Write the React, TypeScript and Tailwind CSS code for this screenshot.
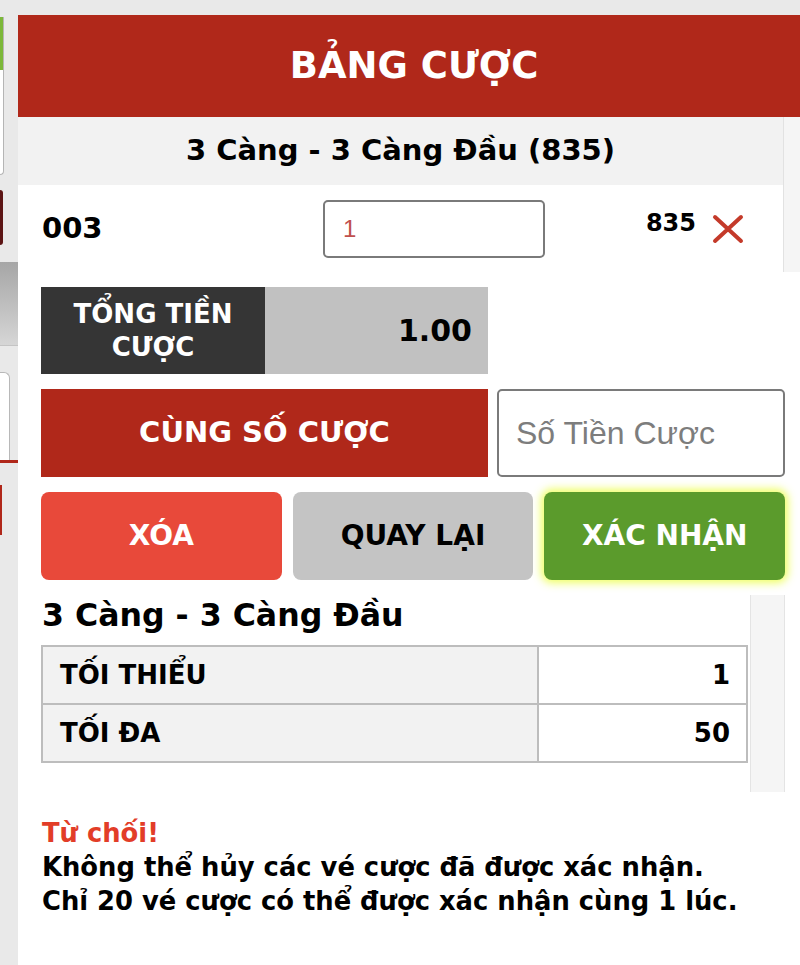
import React from "react"

function LeftStrip() {
  // pieces of the page behind the panel, cut off at the left edge
  return (
    <div className="w-[18px] shrink-0 flex flex-col">
      <div className="h-[17px]" />
      <div className="w-[4px] h-[158px] rounded-br-[4px] border-r border-b border-[#b5b5b5] bg-white overflow-hidden">
        <div className="h-[53px] bg-[#7cb83a]" />
      </div>
      <div className="mt-[15px] w-[3px] h-[55px] rounded-r-[3px] bg-[#5c1414]" />
      <div className="mt-[17px] h-[84px] bg-linear-to-b from-[#a6a6a6] to-[#d6d6d6] border-b border-[#c4c4c4]" />
      <div className="mt-[26px] w-[10px] h-[88px] rounded-tr-[6px] border-t border-r border-[#b8b8b8] bg-white" />
      <div className="h-[3px] bg-[#b0271a]" />
      <div className="mt-[22px] w-[2px] h-[50px] bg-[#b0271a]" />
    </div>
  )
}

function CloseIcon() {
  return (
    <svg width="34" height="30" viewBox="0 0 34 30" className="shrink-0">
      <path d="M4 3 L30 27 M30 3 L4 27" stroke="#c43a2a" strokeWidth="4" strokeLinecap="round" />
    </svg>
  )
}

export default function App() {
  return (
    <div className="w-[800px] h-[965px] flex bg-[#e9e9e9] overflow-hidden font-['DejaVu_Sans',sans-serif] font-bold text-black">
      <LeftStrip />

      <div className="flex-1 mt-[15px] flex flex-col bg-white">
        {/* Header */}
        <div className="h-[102px] shrink-0 bg-[#b0281a] flex items-center justify-center pl-[10px] text-white text-[37px]">
          BẢNG CƯỢC
        </div>

        {/* Bet list */}
        <div className="flex shrink-0">
          <div className="w-[765px]">
            <div className="h-[68px] bg-[#f2f2f2] flex items-center justify-center text-[29px]">
              3 Càng - 3 Càng Đầu (835)
            </div>
            <div className="h-[87px] flex items-center pl-[24px] pr-[38px]">
              <span className="w-[281px] text-[29px]">003</span>
              <input
                readOnly
                value="1"
                className="w-[222px] h-[58px] rounded-[5px] border-2 border-[#7a7a7a] pl-[18px] text-[24px] font-normal text-[#c0504d] font-['Liberation_Sans',sans-serif] outline-none"
              />
              <div className="flex-1 flex items-center justify-end gap-[15px]">
                <span className="text-[24px] mb-[12px]">835</span>
                <CloseIcon />
              </div>
            </div>
          </div>
          <div className="flex-1 bg-[#f5f5f5] border-l border-[#e2e2e2]" />
        </div>

        {/* Body */}
        <div className="pl-[23px] flex flex-col">
          <div className="mt-[15px] flex h-[87px] w-[447px]">
            <div className="w-[224px] bg-[#353535] text-white text-[26px] leading-[33px] flex items-center justify-center text-center">
              TỔNG TIỀN
              <br />
              CƯỢC
            </div>
            <div className="flex-1 bg-[#c1c1c1] flex items-center justify-end pr-[16px] text-[30px]">
              1.00
            </div>
          </div>

          <div className="mt-[15px] flex gap-[9px] h-[88px] w-[744px]">
            <div className="w-[447px] bg-[#b0281a] text-white text-[29px] flex items-center justify-center">
              CÙNG SỐ CƯỢC
            </div>
            <input
              placeholder="Số Tiền Cược"
              className="flex-1 min-w-0 rounded-[5px] border-2 border-[#7a7a7a] pl-[17px] text-[32px] font-normal font-['Liberation_Sans',sans-serif] placeholder:text-[#7d7d7d] outline-none"
            />
          </div>

          <div className="mt-[15px] grid grid-cols-3 gap-[11px] h-[88px] w-[744px] text-[28px]">
            <button className="rounded-[8px] bg-[#e8493a] text-white">XÓA</button>
            <button className="rounded-[8px] bg-[#c4c4c4] text-black">QUAY LẠI</button>
            <button className="rounded-[8px] bg-[#5b9b2c] text-white shadow-[0_0_8px_3px_rgba(236,255,70,0.85)]">
              XÁC NHẬN
            </button>
          </div>

          {/* Limits */}
          <div className="mt-[15px] flex items-start">
            <div className="w-[707px]">
              <div className="h-[42px] flex items-center pl-[1px] text-[31.6px]">3 Càng - 3 Càng Đầu</div>
              <table className="mt-[8px] w-[707px] border-collapse border-2 border-[#bdbdbd] text-[26px]">
                <tbody>
                  <tr className="h-[58px]">
                    <td className="w-[496px] bg-[#f2f2f2] border-2 border-[#bdbdbd] pl-[17px]">TỐI THIỂU</td>
                    <td className="border-2 border-[#bdbdbd] text-right pr-[16px]">1</td>
                  </tr>
                  <tr className="h-[58px]">
                    <td className="w-[496px] bg-[#f2f2f2] border-2 border-[#bdbdbd] pl-[17px]">TỐI ĐA</td>
                    <td className="border-2 border-[#bdbdbd] text-right pr-[16px]">50</td>
                  </tr>
                </tbody>
              </table>
            </div>
            <div className="ml-[2px] w-[35px] h-[197px] bg-[#f5f5f5] border-x border-[#e4e4e4]" />
          </div>

          {/* Notice */}
          <div className="mt-[24px] pl-[1px] text-[25.8px] leading-[34px] whitespace-nowrap">
            <p className="text-[#e23d28]">Từ chối!</p>
            <p>Không thể hủy các vé cược đã được xác nhận.</p>
            <p>Chỉ 20 vé cược có thể được xác nhận cùng 1 lúc.</p>
          </div>
        </div>
      </div>
    </div>
  )
}
